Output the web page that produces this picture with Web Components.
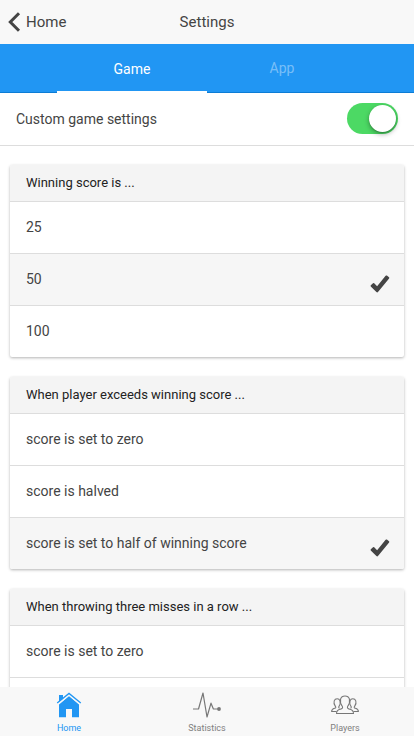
<!DOCTYPE html>
<html lang="en">
<head>
<meta charset="utf-8">
<title>Settings</title>
<style>
html,body{margin:0;height:100%;overflow:hidden;background:#fff}
body{font-family:Roboto,"Open Sans",sans-serif;color:#444}
</style>
</head>
<body>
<settings-page></settings-page>
<script>
const define = (name, html) => {
  const template = document.createElement('template');
  template.innerHTML = html;
  customElements.define(name, class extends HTMLElement {
    constructor() {
      super();
      this.attachShadow({mode: 'open'}).append(template.content.cloneNode(true));
    }
  });
};

define('nav-bar', `
<style>
:host{display:grid;grid-template-columns:1fr auto 1fr;align-items:center;height:44px;flex:none;background:#f8f8f8;font-size:15px;line-height:44px}
.back{display:flex;align-items:center;gap:5px;padding-left:8px}
svg{display:block}
</style>
<div class="back"><svg width="13" height="20" viewBox="0 0 13 20"><path d="M11 1.2 2.3 10 11 18.8" fill="none" stroke="#444" stroke-width="3"/></svg><slot name="back"></slot></div>
<slot></slot>`);

define('top-tabs', `
<style>
:host{display:flex;justify-content:center;box-sizing:border-box;height:49px;flex:none;background:#2196f3;box-shadow:inset 0 -1px #0c7cd5}
</style><slot></slot>`);

define('top-tab', `
<style>
:host{display:block;box-sizing:border-box;width:150px;height:49px;text-align:center;font-size:14px;line-height:49px;color:rgba(255,255,255,.4)}
:host([active]){color:#fff;border-bottom:2px solid #fff;line-height:51px}
</style><slot></slot>`);

define('toggle-switch', `
<style>
:host{display:flex;justify-content:flex-end;box-sizing:border-box;width:51px;height:31px;padding:2px;border-radius:16px;background:#4cd964}
i{display:block;width:27px;height:27px;border-radius:50%;background:#fff;box-shadow:0 2px 5px rgba(0,0,0,.35),0 1px 1px rgba(0,0,0,.15)}
</style><i></i>`);

define('toggle-row', `
<style>
:host{display:flex;align-items:center;justify-content:space-between;box-sizing:border-box;height:53px;flex:none;padding:0 16px 2px;border-bottom:1px solid #ddd;font-size:14px}
span{padding-top:2px}
</style><span><slot></slot></span><toggle-switch></toggle-switch>`);

define('option-card', `
<style>
:host{display:block;flex:none;margin:0 10px;border-radius:2px;overflow:hidden;background:#fff;box-shadow:0 1px 3px rgba(0,0,0,.3)}
header{height:36px;padding:0 16px;background:#f4f4f4;color:#222;font-size:13px;line-height:36px}
</style><header><slot name="title"></slot></header><slot></slot>`);

define('option-row', `
<style>
:host{display:flex;align-items:center;justify-content:space-between;box-sizing:border-box;height:52px;padding:0 14px 0 16px;border-top:1px solid #ddd;font-size:14px;line-height:51px}
:host([checked]){background:#f6f6f6}
svg{display:none;margin-top:9px}
:host([checked]) svg{display:block}
</style><slot></slot>
<svg width="20" height="18" viewBox="0 0 20 18"><path d="M.8 10.3 3 8.2Q3.6 7.7 4.2 8.3L7.1 11.2 15.6.8Q16.2.1 16.9.6L19 2.3Q19.6 2.8 19.1 3.5L8 17Q7.2 17.9 6.4 17L1 11.7Q.2 11 .8 10.3Z" fill="#444"/></svg>`);

define('bottom-bar', `
<style>
:host{display:grid;grid-template-columns:repeat(3,1fr);height:49px;flex:none;background:#f8f8f8}
</style><slot></slot>`);

define('bottom-tab', `
<style>
:host{display:flex;flex-direction:column;align-items:center;padding-top:5px;color:#808080;font-size:9px;line-height:14px}
:host([active]){color:#2196f3}
.label{margin-top:1px}
</style><slot name="icon"></slot><div class="label"><slot></slot></div>`);

define('settings-page', `
<style>
:host{display:flex;flex-direction:column;width:100%;height:736px;overflow:hidden;background:#fff}
main{display:flex;flex-direction:column;flex:1;min-height:0;overflow:hidden}
.cards{display:flex;flex-direction:column;gap:20px;padding-top:19px}
svg{display:block}
</style>
<nav-bar><span slot="back">Home</span><span>Settings</span></nav-bar>
<top-tabs><top-tab active>Game</top-tab><top-tab>App</top-tab></top-tabs>
<main>
<toggle-row>Custom game settings</toggle-row>
<div class="cards">
<option-card><span slot="title">Winning score is ...</span><option-row>25</option-row><option-row checked>50</option-row><option-row>100</option-row></option-card>
<option-card><span slot="title">When player exceeds winning score ...</span><option-row>score is set to zero</option-row><option-row>score is halved</option-row><option-row checked>score is set to half of winning score</option-row></option-card>
<option-card><span slot="title">When throwing three misses in a row ...</span><option-row>score is set to zero</option-row><option-row></option-row></option-card>
</div>
</main>
<bottom-bar>
<bottom-tab active><svg slot="icon" width="26" height="28" viewBox="0 0 26 28"><path d="M3 3h4v5L3 11Z" fill="#2196f3"/><path d="M13 4 23 12.5V25.3H16V17H10v8.3H3V12.5Z" fill="#2196f3"/><path d="M1.4 12.2 13 2.9 24.6 12.2" fill="none" stroke="#f8f8f8" stroke-width="1.8"/><path d="M1.2 11 13 1.4 24.8 11" fill="none" stroke="#2196f3" stroke-width="1.3"/></svg>Home</bottom-tab>
<bottom-tab><svg slot="icon" width="28" height="28" viewBox="0 0 28 28"><path d="M0 17H5.5L10 1 14 25 18 11.2 20.4 17H26" fill="none" stroke="#777" stroke-width="1.2" stroke-linejoin="round"/><circle cx="26" cy="17" r="1.9" fill="#777"/></svg>Statistics</bottom-tab>
<bottom-tab><svg slot="icon" width="28" height="28" viewBox="0 0 28 28"><g fill="none" stroke="#777" stroke-width="1.05" stroke-linejoin="round"><path d="M5.5 21.5C5.5 18.3 7 18 9.3 17.2 11.3 16.6 12 16 11.4 14.5 9.6 12 9 9.5 9.6 7 10.2 4.9 12 4 14 4s3.8.9 4.4 3c.6 2.5 0 5-1.8 7.5-.6 1.5.1 2.1 2.1 2.7 2.3.8 3.8 1.1 3.8 4.3Z"/><path d="M5.5 19.5H.6C.6 17 2 16.8 4 16.2 5 15.9 5 15.2 4.4 14.4 3 12.5 2.7 10.4 3.2 8.9 3.8 7.2 5 6.8 6.2 6.8s2.3.6 2.8 2.1c.5 1.8.1 3.8-1 5.5-.5.8-.4 1.5.5 1.8"/><path d="M22.5 19.5h4.9c0-2.5-1.4-2.7-3.4-3.3-1-.3-1-1-.4-1.8 1.4-1.9 1.7-4 1.2-5.5-.6-1.7-1.8-2.1-3-2.1s-2.3.6-2.8 2.1c-.5 1.8-.1 3.8 1 5.5.5.8.4 1.5-.5 1.8"/></g></svg>Players</bottom-tab>
</bottom-bar>`);
</script>
</body>
</html>
